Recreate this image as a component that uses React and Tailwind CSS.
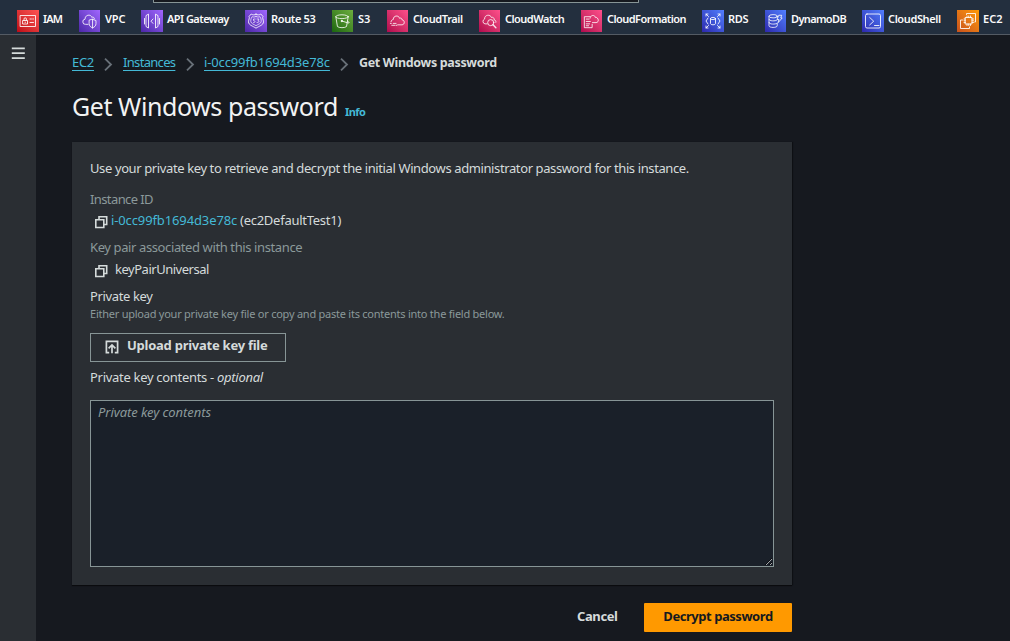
const Svg = ({ children }) => (
  <svg viewBox="0 0 22 22" className="h-[22px] w-full" fill="none" stroke="#fff" strokeOpacity="0.85" strokeWidth="1" strokeLinecap="round" strokeLinejoin="round">
    {children}
  </svg>
);

const icons = {
  iam: (
    <Svg>
      <path d="M3.5 5.5h15v11h-15z" />
      <path d="M6 10.5h4.5v3.5H6zM7 10.3V9a1.2 1.2 0 0 1 2.4 0v1.3M8.2 12v.6M13 9h1.4M15.7 9h.8M13 12.5h3.5" />
    </Svg>
  ),
  vpc: (
    <Svg>
      <path d="M9.5 14.5H7a2.7 2.7 0 0 1-.6-5.4C6 4.3 12.6 3.5 13.4 7.2c1.3-.8 2.7 0 2.7 1.5" />
      <path d="M14.2 9.2l3.6 1.3v3.3c0 2.2-1.6 3.5-3.6 4.5-2-1-3.6-2.3-3.6-4.5v-3.3zM14.2 9.2v9.1" />
    </Svg>
  ),
  api: (
    <Svg>
      <path d="M7.500 4.500v13.500L5 16.500V6zM14.500 4.500v13.500l2.500-1.500V6zM3.500 8.500v5.500M18.500 8.500v5.500" />
      <path d="M12 9l-2 2.200 2 2.200" />
    </Svg>
  ),
  route: (
    <Svg>
      <path d="M11 4.2C9.5 5.300 7.500 5 6.200 4L4 6.500c1 1.500-.5 3-.5 5.300 0 3.400 4.500 4.200 7.500 6.400 3-2.200 7.500-3 7.500-6.400 0-2.300-1.500-3.800-.5-5.300L15.800 4C14.500 5 12.500 5.300 11 4.200z" />
      <path strokeWidth="0.8" d="M11 6.500c-1.500.8-2.900.6-4 .2-1 1.500-1.300 3-1.200 4.800.2 2.300 3.200 2.700 5.200 4.200 2-1.500 5-1.900 5.200-4.200.1-1.800-.2-3.300-1.200-4.800-1.100.4-2.500.6-4-.2zM10.200 9H8.500v1.500c2 0 2 2.500 0 2M12 9h2l-1 1.500c1.600 0 1.200 2.500-1 2" />
    </Svg>
  ),
  s3: (
    <Svg>
      <ellipse cx="10.5" cy="6.500" rx="6.500" ry="2" />
      <path d="M4 6.500l1.700 10.300c1.500 1.600 8 1.600 9.500 0L17 6.500M10.300 11l6.300 2c2.200.4 1.700-.8-.5-2" />
      <circle cx="10.2" cy="11" r=".7" fill="#fff" />
    </Svg>
  ),
  trail: (
    <Svg>
      <path d="M4.200 11.800c.2-1.500 1.200-2.200 2.400-2.400C6.500 5 12.300 4.600 13.200 8.200c1.300-.8 2.500.1 2.500 1.500 3.200.4 3.200 5.200 0 5.300h-4.500M3.500 13.500h1M6.500 13.500h3M5 15.500h3.500M9.800 15.500h.5" />
    </Svg>
  ),
  watch: (
    <Svg>
      <path d="M8.500 14H6.300a2.600 2.600 0 0 1-.4-5C5.500 4.300 12 3.700 13 7.300c1.700-.7 3 .6 2.800 2.300 1.500.4 2.200 1.600 1.900 2.800" />
      <circle cx="12.3" cy="12.7" r="3.200" />
      <path d="M14.700 15l3 3" strokeWidth="1.5" />
    </Svg>
  ),
  formation: (
    <Svg>
      <path d="M9.500 6.500h-6V18h8.200v-3.500M5.500 9h3M5.500 11.500h4.300M5.500 14h3.500M5.500 16h2.500" />
      <path d="M9.600 8c.2-3.900 5.100-3.500 5.400-.8 3.400-.5 4.500 5.300.8 5.500H12" />
    </Svg>
  ),
  rds: (
    <Svg>
      <ellipse cx="11" cy="8.5" rx="2.500" ry="1.100" />
      <path d="M8.500 8.500v5.200c0 1.500 5 1.500 5 0V8.500M6 8l-2 3 2 3M16 8l2 3-2 3M4 6V4h2M4 4l2.500 2.500M18 6V4h-2M18 4l-2.500 2.500M4 16v2h2M4 18l2.500-2.500M18 16v2h-2M18 18l-2.500-2.500" />
    </Svg>
  ),
  dynamo: (
    <Svg>
      <ellipse cx="8.500" cy="6" rx="4.300" ry="1.700" />
      <path d="M4.200 6v10c0 2.300 8.600 2.300 8.600 0v-2.500M4.200 9.300c0 2 7 2 8.200.8M4.200 12.700c0 2 7 2 8.200.8M12.800 6v1M14.800 5h2.700l-1 2.800H18l-4.300 5 .9-3.400h-1.600z" />
    </Svg>
  ),
  shell: (
    <Svg>
      <rect x="3.5" y="4" width="15" height="14" rx="1.5" />
      <path d="M7.700 7.500l4 3.700-4 3.700M12.500 15.500h4.500" />
    </Svg>
  ),
  ec2: (
    <Svg>
      <rect x="8.5" y="7.5" width="6.500" height="6.500" />
      <path d="M10 7.500V6M11.750 7.500V6M13.500 7.500V6M10 14v1.500M11.750 14v1.500M13.500 14v1.500M8.500 9H7M8.500 10.750H7M8.500 12.500H7M15 9h1.500M15 10.750h1.500M15 12.500h1.500" />
      <path d="M9.500 4.500v-1h9v8.500h-.8M5.500 10h-2v8.500h9V17" />
    </Svg>
  ),
};

const purple = "bg-linear-to-tr from-[#4d27a8] to-[#a166ff]";
const pink = "bg-linear-to-tr from-[#b0084d] to-[#ff4f8b]";
const blue = "bg-linear-to-tr from-[#2e27ad] to-[#527fff]";

const services = [
  { name: "IAM", icon: "iam", tone: "bg-linear-to-tr from-[#bd0816] to-[#ff5252]", item: "w-[62px]", box: "w-[22px]", text: "tracking-[-0.85px]" },
  { name: "VPC", icon: "vpc", tone: purple, item: "w-[62px]", box: "w-[21px]", text: "tracking-[-0.1px]" },
  { name: "API Gateway", icon: "api", tone: purple, item: "w-[104px]", box: "w-[22px]", text: "tracking-[-0.54px]" },
  { name: "Route 53", icon: "route", tone: purple, item: "w-[87px]", box: "w-[22px]", text: "tracking-[-0.35px]" },
  { name: "S3", icon: "s3", tone: "bg-linear-to-tr from-[#1b660f] to-[#6cae3e]", item: "w-[55px]", box: "w-[21px]", text: "tracking-normal" },
  { name: "CloudTrail", icon: "trail", tone: pink, item: "w-[92px]", box: "w-[21px]", text: "tracking-[-0.4px]" },
  { name: "CloudWatch", icon: "watch", tone: pink, item: "w-[102px]", box: "w-[21px]", text: "tracking-[-0.52px]" },
  { name: "CloudFormation", icon: "formation", tone: pink, item: "w-[121px]", box: "w-[21px]", text: "tracking-[-0.55px]" },
  { name: "RDS", icon: "rds", tone: blue, item: "w-[63px]", box: "w-[22px]", text: "tracking-[-0.3px]" },
  { name: "DynamoDB", icon: "dynamo", tone: blue, item: "w-[97px]", box: "w-[21px]", text: "tracking-[-0.65px]" },
  { name: "CloudShell", icon: "shell", tone: blue, item: "w-[95px]", box: "w-[22px]", text: "tracking-[-0.38px]" },
  { name: "EC2", icon: "ec2", tone: "bg-linear-to-tr from-[#c8511b] to-[#ff9900]", item: "w-[53px]", box: "w-[22px]", text: "tracking-normal" },
];

function ServiceBar() {
  return (
    <header className="relative flex h-[35px] shrink-0 border-b border-[#545b64] bg-[#232f3e] pt-[10px] pl-[17px]">
      <div className="absolute top-0 left-[153px] h-[3px] w-[486px] rounded-b-[1px] border border-t-0 border-[#879596] bg-[#16191f]" />
      {services.map((s) => (
        <a key={s.name} className={`flex shrink-0 ${s.item}`}>
          <span className="flex w-[26px] shrink-0">
            <span className={`h-[22px] shrink-0 ${s.box} ${s.tone}`}>{icons[s.icon]}</span>
          </span>
          <span className={`text-[11px] leading-[18px] font-semibold whitespace-nowrap text-[#fafafa] ${s.text}`}>{s.name}</span>
        </a>
      ))}
    </header>
  );
}

const Chevron = () => (
  <svg viewBox="0 0 9 13" className="mt-[6px] h-[13px] w-[9px]" fill="none" stroke="#687078" strokeWidth="1.8">
    <path d="M1 .7l6 5.800-6 5.800" />
  </svg>
);

const CopyIcon = () => (
  <svg viewBox="0 0 14 14" className="mt-[5px] ml-1 h-[14px] w-[14px] shrink-0" fill="none" stroke="#d5dbdb" strokeWidth="1.6">
    <path d="M1.800 4.800h8v7.700h-8zM5 4.500V1.800h7.700v7.700H10" />
  </svg>
);

const UploadIcon = () => (
  <svg viewBox="0 0 14 14" className="h-[14px] w-[14px] shrink-0" fill="none" stroke="#d5dbdb" strokeWidth="1.7">
    <path d="M4.200 12.600H1.400V1.400h11.200v11.200H9.800" />
    <path d="M7 13.200V5M3.600 8.300L7 5l3.400 3.300" />
  </svg>
);

export default function App() {
  return (
    <div className="flex h-[641px] w-[1010px] flex-col overflow-hidden bg-[#16191f] font-['Noto_Sans',sans-serif] text-[13px] leading-[20px] whitespace-nowrap text-[#d5dbdb]">
      <ServiceBar />
      <div className="flex min-h-0 flex-1">
        <aside className="flex w-9 shrink-0 bg-[#2a2e33] pt-3 pl-[11px]">
          <svg viewBox="0 0 14 12" className="h-3 w-[14px]" stroke="#d5dbdb" strokeWidth="1.7">
            <path d="M.8 1.300h13M.8 6.200h13M.8 11.100h13" />
          </svg>
        </aside>
        <main className="ml-9 flex w-[720px] flex-col pt-[17px]">
          <nav className="flex h-5">
            <a className="w-8 tracking-[-0.3px] text-[#44b9d6] underline underline-offset-[3px]">EC2</a>
            <Chevron />
            <a className="ml-[10px] w-[63px] tracking-[-0.68px] text-[#44b9d6] underline underline-offset-[3px]">Instances</a>
            <Chevron />
            <a className="ml-[9px] w-[136px] tracking-[-0.13px] text-[#44b9d6] underline underline-offset-[3px]">i-0cc99fb1694d3e78c</a>
            <Chevron />
            <span className="ml-[10px] pt-px text-[12.5px] font-bold tracking-[-0.34px]">Get Windows password</span>
          </nav>
          <div className="mt-[18px] flex h-8 items-baseline">
            <h1 className="w-[273px] text-[25px] leading-8 tracking-[-0.43px] text-[#f2f3f3]">Get Windows password</h1>
            <a className="text-[11px] leading-4 font-bold tracking-[-0.6px] text-[#44b9d6]">Info</a>
          </div>
          <section className="mt-5 flex h-[443px] flex-col bg-[#2a2e33] px-[18px] pt-4 shadow-[0_1px_1px_rgba(0,0,0,0.5),1px_0_1px_rgba(0,0,0,0.3)]">
            <p className="tracking-[-0.388px]">Use your private key to retrieve and decrypt the initial Windows administrator password for this instance.</p>
            <div className="mt-[11px] tracking-[-0.6px] text-[#8b999a]">Instance ID</div>
            <div className="mt-px flex h-5">
              <CopyIcon />
              <a className="ml-[3px] w-[129px] tracking-[-0.12px] text-[#44b9d6]">i-0cc99fb1694d3e78c</a>
              <span className="tracking-[-0.26px]">(ec2DefaultTest1)</span>
            </div>
            <div className="mt-[7px] tracking-[-0.39px] text-[#8b999a]">Key pair associated with this instance</div>
            <div className="mt-[2px] flex h-5">
              <CopyIcon />
              <span className="ml-[7px] tracking-[-0.48px]">keyPairUniversal</span>
            </div>
            <div className="mt-[7px] tracking-[-0.36px]">Private key</div>
            <div className="text-[11px] leading-4 tracking-[-0.24px] text-[#8b999a]">
              Either upload your private key file or copy and paste its contents into the field below.
            </div>
            <button className="mt-[11px] flex h-[29px] w-[196px] shrink-0 border border-[#879596] pt-[6px] pl-[14px]">
              <UploadIcon />
              <span className="-mt-[5px] ml-[8px] font-bold tracking-[-0.25px]">Upload private key file</span>
            </button>
            <div className="mt-[5px] tracking-[-0.3px]">
              Private key contents - <i>optional</i>
            </div>
            <textarea
              className="mt-[13px] h-[167px] w-[684px] shrink-0 border border-[#879596] bg-[#1a2029] px-[7px] pt-px leading-5 tracking-[-0.07px] placeholder:text-[#8b999a] placeholder:italic"
              placeholder="Private key contents"
            />
          </section>
          <footer className="mt-[18px] flex h-[29px] justify-end">
            <button className="mr-[25px] w-[42px] pb-[3px] text-left font-bold tracking-[-0.4px]">Cancel</button>
            <button className="w-[148px] rounded-[1px] bg-[#ff9900] pb-[3px] font-bold tracking-[-0.45px] text-[#16191f]">Decrypt password</button>
          </footer>
        </main>
      </div>
    </div>
  );
}
